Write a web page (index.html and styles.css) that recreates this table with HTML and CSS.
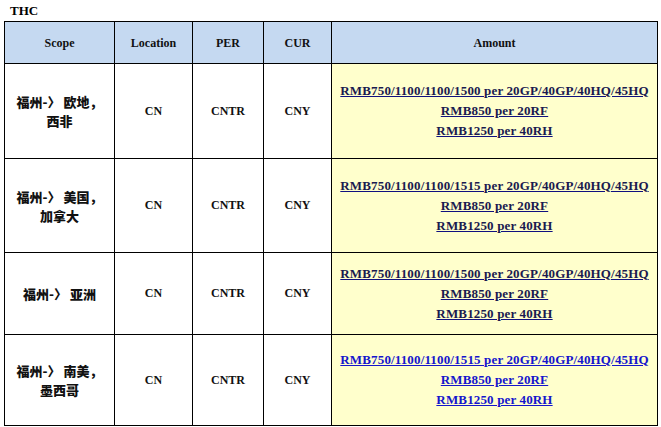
FILE: index.html
```html
<!DOCTYPE html>
<html>
<head>
<meta charset="utf-8">
<link rel="stylesheet" href="styles.css">
</head>
<body>
<div class="page">
  <div class="title">THC</div>
  <table class="rates">
    <colgroup>
      <col class="c-scope"><col class="c-loc"><col class="c-per"><col class="c-cur"><col class="c-amt">
    </colgroup>
    <thead>
      <tr class="head">
        <th>Scope</th><th>Location</th><th>PER</th><th>CUR</th><th>Amount</th>
      </tr>
    </thead>
    <tbody>
      <tr class="r1">
        <td class="scope">福州-〉 欧地，<br>西非</td>
        <td>CN</td><td>CNTR</td><td>CNY</td>
        <td class="amt"><a>RMB750/1100/1100/1500 per 20GP/40GP/40HQ/45HQ</a><br><a>RMB850 per 20RF</a><br><a>RMB1250 per 40RH</a></td>
      </tr>
      <tr class="r2">
        <td class="scope">福州-〉 美国，<br>加拿大</td>
        <td>CN</td><td>CNTR</td><td>CNY</td>
        <td class="amt"><a>RMB750/1100/1100/1515 per 20GP/40GP/40HQ/45HQ</a><br><a>RMB850 per 20RF</a><br><a>RMB1250 per 40RH</a></td>
      </tr>
      <tr class="r3">
        <td class="scope">福州-〉 亚洲</td>
        <td>CN</td><td>CNTR</td><td>CNY</td>
        <td class="amt"><a>RMB750/1100/1100/1500 per 20GP/40GP/40HQ/45HQ</a><br><a>RMB850 per 20RF</a><br><a>RMB1250 per 40RH</a></td>
      </tr>
      <tr class="r4">
        <td class="scope">福州-〉 南美，<br>墨西哥</td>
        <td>CN</td><td>CNTR</td><td>CNY</td>
        <td class="amt blue"><a>RMB750/1100/1100/1515 per 20GP/40GP/40HQ/45HQ</a><br><a>RMB850 per 20RF</a><br><a>RMB1250 per 40RH</a></td>
      </tr>
    </tbody>
  </table>
</div>
</body>
</html>
```

FILE: styles.css
```css
html, body {
  margin: 0;
  padding: 0;
  background: #ffffff;
}
.page {
  padding: 2px 0 0 4px;
  font-family: "Liberation Serif", "Times New Roman", serif;
  color: #000;
}
.title {
  font-family: "Liberation Serif", serif;
  font-weight: bold;
  font-size: 13px;
  line-height: 17px;
  padding-left: 6px;
  height: 19px;
}
.rates {
  border-collapse: collapse;
  table-layout: fixed;
  width: 653px;
}
.c-scope { width: 110px; }
.c-loc { width: 78px; }
.c-per { width: 71px; }
.c-cur { width: 68px; }
.c-amt { width: 326px; }
.rates th, .rates td {
  border: 1px solid #000;
  text-align: center;
  vertical-align: middle;
  padding: 0;
  font-family: "Liberation Serif", serif;
  font-weight: bold;
  font-size: 12px;
  color: #111;
}
.rates .head th {
  background: #c5d9f1;
  height: 40px;
  padding-top: 1px;
}
.r1 td { height: 94px; }
.r2 td { height: 93px; }
.r3 td { height: 81px; }
.r4 td { height: 90px; }
.rates td.scope {
  font-family: "Noto Sans CJK SC", sans-serif;
  font-weight: 900;
  font-size: 13px;
  line-height: 19px;
}
.rates td.amt {
  background: #ffffcc;
  font-size: 13px;
  letter-spacing: 0.15px;
  line-height: 20px;
  white-space: nowrap;
}
.amt a {
  color: #1a1a50;
  text-decoration: underline;
  text-decoration-color: #101080;
}
.amt.blue a {
  color: #1515cc;
  text-decoration-color: #1515cc;
}
```
